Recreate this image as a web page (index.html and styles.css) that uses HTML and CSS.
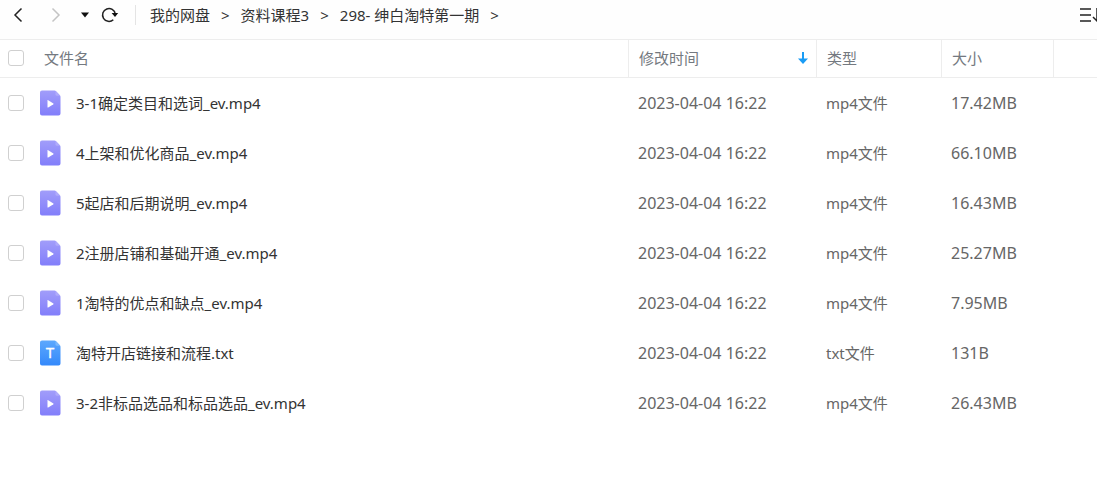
FILE: index.html
```html
<!DOCTYPE html>
<html lang="zh-CN">
<head>
    <meta charset="UTF-8">
    <meta name="viewport" content="width=device-width, initial-scale=1.0">
    <title>我的网盘</title>
    <link rel="stylesheet" href="styles.css">
</head>
<body>
    <!-- Shared icons -->
    <svg class="sprite" aria-hidden="true">
        <defs>
            <linearGradient id="videoFill" x1="0" y1="0" x2="0" y2="1">
                <stop offset="0" stop-color="#a19dfa"/>
                <stop offset="1" stop-color="#827efa"/>
            </linearGradient>
            <linearGradient id="textFill" x1="0" y1="0" x2="0" y2="1">
                <stop offset="0" stop-color="#5ca8fd"/>
                <stop offset="1" stop-color="#3489fb"/>
            </linearGradient>
        </defs>
        <symbol id="video" viewBox="0 0 21 26">
            <path d="M2 .5h12.500q.8 0 1.400.6l4 4.200q.6.600.6 1.400V23.500a2 2 0 0 1-2 2H2a2 2 0 0 1-2-2v-21a2 2 0 0 1 2-2z" fill="url(#videoFill)"/>
            <path d="M15.500.9L20.200 5.800H17a1.500 1.500 0 0 1-1.500-1.500z" fill="#b0acfb"/>
            <path d="M7.500 10.600v6.400q0 .8.700.4l5.200-3.200q.5-.4 0-.8l-5.200-3.200q-.7-.4-.7.400z" fill="#fff"/>
        </symbol>
    </svg>

    <header class="toolbar">
        <nav class="history">
            <button type="button" aria-label="后退">
                <svg width="10" height="16" viewBox="0 0 10 16"><path d="M8.500 1.500L2 8l6.500 6.500" fill="none" stroke="#222" stroke-width="1.500"/></svg>
            </button>
            <button type="button" class="forward" aria-label="前进" disabled>
                <svg width="10" height="16" viewBox="0 0 10 16"><path d="M1.500 1.500L8 8l-6.500 6.500" fill="none" stroke="#c4c4c4" stroke-width="1.500"/></svg>
            </button>
            <button type="button" class="recent" aria-label="历史记录">
                <svg width="8" height="6" viewBox="0 0 8 6"><path d="M0 .5h8L4 5.500z" fill="#111"/></svg>
            </button>
            <button type="button" class="refresh" aria-label="刷新">
                <svg width="18" height="16" viewBox="0 0 18 16"><path d="M12.300 12.700A6.400 6.400 0 1 1 14.300 7" fill="none" stroke="#222" stroke-width="1.500"/><path d="M10.600 6h6.600l-3.200 4z" fill="#111"/></svg>
            </button>
        </nav>
        <nav class="path">
            <a href="#">我的网盘</a>
            <span>&gt;</span>
            <a href="#">资料课程3</a>
            <span>&gt;</span>
            <a href="#">298- 绅白淘特第一期</a>
            <span>&gt;</span>
        </nav>
        <button type="button" class="sort" aria-label="排序">
            <svg width="22" height="16" viewBox="0 0 22 16"><path d="M1 2h11M1 8h11M1 14h11" stroke="#222" stroke-width="1.500"/><path d="M18 1v13M14 10l4 4 4-4" fill="none" stroke="#222" stroke-width="1.500"/></svg>
        </button>
    </header>

    <table class="files">
        <colgroup>
            <col>
            <col class="col-time">
            <col class="col-type">
            <col class="col-size">
            <col class="col-end">
        </colgroup>
        <thead>
            <tr>
                <th><div class="name"><input type="checkbox" id="all"><label for="all">文件名</label></div></th>
                <th>
                    <div class="sorted">修改时间
                        <svg width="10" height="12" viewBox="0 0 10 12"><path d="M5 0v9" stroke="#1a9cf5" stroke-width="2"/><path d="M0 6.500h10L5 12z" fill="#1a9cf5"/></svg>
                    </div>
                </th>
                <th>类型</th>
                <th>大小</th>
                <th></th>
            </tr>
        </thead>
        <tbody>
            <tr>
                <td><div class="name"><input type="checkbox" id="f1"><svg class="file-icon"><use href="#video"/></svg><label for="f1">3-1确定类目和选词_ev.mp4</label></div></td>
                <td class="num">2023-04-04 16:22</td>
                <td>mp4文件</td>
                <td class="num">17.42MB</td>
                <td></td>
            </tr>
            <tr>
                <td><div class="name"><input type="checkbox" id="f2"><svg class="file-icon"><use href="#video"/></svg><label for="f2">4上架和优化商品_ev.mp4</label></div></td>
                <td class="num">2023-04-04 16:22</td>
                <td>mp4文件</td>
                <td class="num">66.10MB</td>
                <td></td>
            </tr>
            <tr>
                <td><div class="name"><input type="checkbox" id="f3"><svg class="file-icon"><use href="#video"/></svg><label for="f3">5起店和后期说明_ev.mp4</label></div></td>
                <td class="num">2023-04-04 16:22</td>
                <td>mp4文件</td>
                <td class="num">16.43MB</td>
                <td></td>
            </tr>
            <tr>
                <td><div class="name"><input type="checkbox" id="f4"><svg class="file-icon"><use href="#video"/></svg><label for="f4">2注册店铺和基础开通_ev.mp4</label></div></td>
                <td class="num">2023-04-04 16:22</td>
                <td>mp4文件</td>
                <td class="num">25.27MB</td>
                <td></td>
            </tr>
            <tr>
                <td><div class="name"><input type="checkbox" id="f5"><svg class="file-icon"><use href="#video"/></svg><label for="f5">1淘特的优点和缺点_ev.mp4</label></div></td>
                <td class="num">2023-04-04 16:22</td>
                <td>mp4文件</td>
                <td class="num">7.95MB</td>
                <td></td>
            </tr>
            <tr>
                <td>
                    <div class="name">
                        <input type="checkbox" id="f6">
                        <svg class="file-icon" viewBox="0 0 21 26">
                            <path d="M2 .5h12.500q.8 0 1.400.6l4 4.200q.6.600.6 1.400V23.500a2 2 0 0 1-2 2H2a2 2 0 0 1-2-2v-21a2 2 0 0 1 2-2z" fill="url(#textFill)"/>
                            <path d="M15.500.9L20.200 5.800H17a1.500 1.500 0 0 1-1.500-1.500z" fill="#7cb9fd"/>
                            <text x="10" y="18" text-anchor="middle" class="icon-letter">T</text>
                        </svg>
                        <label for="f6">淘特开店链接和流程.txt</label>
                    </div>
                </td>
                <td class="num">2023-04-04 16:22</td>
                <td>txt文件</td>
                <td class="num">131B</td>
                <td></td>
            </tr>
            <tr>
                <td><div class="name"><input type="checkbox" id="f7"><svg class="file-icon"><use href="#video"/></svg><label for="f7">3-2非标品选品和标品选品_ev.mp4</label></div></td>
                <td class="num">2023-04-04 16:22</td>
                <td>mp4文件</td>
                <td class="num">26.43MB</td>
                <td></td>
            </tr>
        </tbody>
    </table>
</body>
</html>
```

FILE: styles.css
```css
* {
    margin: 0;
    padding: 0;
    box-sizing: border-box;
}

body {
    background-color: #fff;
    color: #333;
    font-family: "Noto Sans", "Noto Sans CJK SC", sans-serif;
    font-size: 15px;
    line-height: 20px;
    overflow-x: hidden;
}

svg {
    display: block;
    flex: none;
}

.sprite {
    position: absolute;
    width: 0;
    height: 0;
}

button {
    background: none;
    border: none;
    cursor: pointer;
}

/* Toolbar */
.toolbar {
    display: flex;
    align-items: center;
    height: 39px;
    padding: 0 0 10px 13px;
    background-color: #fefefe;
    overflow: hidden;
}

.history {
    display: flex;
    align-items: center;
    height: 20px;
    padding-right: 16px;
    border-right: 1px solid #e4e4e4;
}

.forward {
    margin-left: 28px;
}

.recent {
    margin-left: 20px;
}

.refresh {
    margin-left: 12px;
}

.path {
    display: flex;
    flex: 1;
    gap: 11px;
    margin-left: 14px;
    white-space: nowrap;
}

.path a {
    color: #333;
    text-decoration: none;
}

.sort {
    margin-right: -4px;
}

/* File list */
.files {
    width: 100%;
    table-layout: fixed;
    border-collapse: separate;
    border-spacing: 0;
}

.col-time {
    width: 188px;
}

.col-type {
    width: 125px;
}

.col-size {
    width: 112px;
}

.col-end {
    width: 44px;
}

th {
    height: 39px;
    padding: 0 0 2px 10px;
    border: 1px solid #ededed;
    border-width: 1px 0 1px 1px;
    color: #747980;
    font-weight: normal;
    text-align: left;
}

th:first-child {
    border-left: none;
}

td {
    height: 50px;
    padding-left: 10px;
    color: #666;
    white-space: nowrap;
}

th:first-child,
td:first-child {
    padding-left: 8px;
}

.num {
    font-size: 16px;
}

.name {
    display: flex;
    align-items: center;
}

.name label {
    margin-left: 20px;
}

td .name label {
    margin-left: 15px;
    color: #333;
}

.sorted {
    display: flex;
    align-items: center;
    justify-content: space-between;
    padding-right: 8px;
}

.file-icon {
    width: 21px;
    height: 26px;
    margin-left: 16px;
}

.icon-letter {
    fill: #fff;
    stroke: #fff;
    stroke-width: 0.4px;
    font-family: "Liberation Sans", sans-serif;
    font-size: 14px;
}

input[type="checkbox"] {
    appearance: none;
    flex: none;
    width: 16px;
    height: 16px;
    border: 1px solid #d0d0d0;
    border-radius: 3px;
    background-color: #fff;
}

input[type="checkbox"]:checked {
    border-color: #1a9cf5;
    background-color: #1a9cf5;
}
```
